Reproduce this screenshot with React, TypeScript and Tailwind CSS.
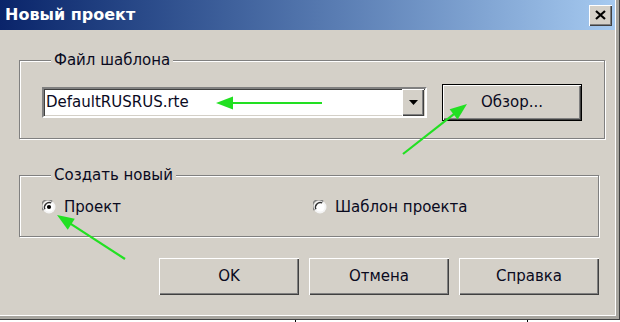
import React from 'react';

const font = { fontFamily: '"DejaVu Sans", Verdana, sans-serif' };

// green pointer arrow drawn from tail to tip
const Arrow: React.FC<{ x1: number; y1: number; x2: number; y2: number }> = ({ x1, y1, x2, y2 }) => {
  const dx = x2 - x1;
  const dy = y2 - y1;
  const len = Math.hypot(dx, dy);
  const ux = dx / len;
  const uy = dy / len;
  const bx = x2 - ux * 17;
  const by = y2 - uy * 17;
  const px = -uy * 6.5;
  const py = ux * 6.5;
  return (
    <g>
      <line x1={x1} y1={y1} x2={bx + ux * 2} y2={by + uy * 2} stroke="#22e022" strokeWidth={2.2} />
      <polygon points={`${x2},${y2} ${bx + px},${by + py} ${bx - px},${by - py}`} fill="#22e022" />
    </g>
  );
};

const Radio: React.FC<{ checked?: boolean }> = ({ checked }) => (
  <svg width="14" height="14" viewBox="0 0 14 14" className="shrink-0">
    <circle cx="7" cy="7" r="6.5" fill="#f4f4f4" />
    <circle cx="7" cy="7" r="4.6" fill="#ffffff" />
    <path d="M1.4 10.2 A6.2 6.2 0 0 1 10.2 1.4" stroke="#808080" strokeWidth="1.4" fill="none" />
    <path d="M2.9 9.2 A4.8 4.8 0 0 1 9.2 2.9" stroke="#303030" strokeWidth="1.4" fill="none" />
    {checked && <circle cx="7" cy="7" r="2.1" fill="#000000" />}
  </svg>
);

const Button: React.FC<{ label: string; isDefault?: boolean }> = ({ label, isDefault }) => (
  <div
    className={`flex h-[37px] w-[140px] items-center justify-center bg-[#d4d0c8] text-[15px] text-[#0a0a1e] ${
      isDefault
        ? 'border border-black shadow-[inset_1px_1px_0_#ffffff,inset_-1px_-1px_0_#404040,inset_-2px_-2px_0_#808080]'
        : 'shadow-[inset_1px_1px_0_#ffffff,inset_-1px_-1px_0_#404040,inset_-2px_-2px_0_#808080]'
    }`}
  >
    {label}
  </div>
);

const App: React.FC = () => {
  return (
    <div className="relative h-[322px] w-[620px] overflow-hidden bg-white" style={font}>
      {/* Dialog frame */}
      <div className="h-[320px] w-[620px] border-r border-b border-[#404040] bg-[#a8a6a0]">
        <div className="flex h-[316px] w-[616px] flex-col border-r border-b border-white bg-[#d4d0c8]">
          {/* Title bar */}
          <div className="flex h-[30px] w-[615px] shrink-0 items-center justify-between bg-gradient-to-r from-[#0a246a] to-[#a6caf0] pr-[3px] pl-[5px]">
            <span className="text-[16px] font-bold text-white">Новый проект</span>
            <div className="flex h-[21px] w-[23px] items-center justify-center bg-[#d4d0c8] shadow-[inset_1px_1px_0_#ffffff,inset_-1px_-1px_0_#404040,inset_-2px_-2px_0_#808080]">
              <svg width="11" height="10" viewBox="0 0 11 10">
                <path d="M1 1 L10 9 M10 1 L1 9" stroke="#000" strokeWidth="2.2" />
              </svg>
            </div>
          </div>

          {/* Content */}
          <div className="flex flex-1 flex-col pl-[19px] text-[#0a0a1e]">
            {/* Template file */}
            <fieldset className="mt-[22px] w-[580px] border border-[#808080] px-[22px] pt-[16px] pb-[17px] shadow-[1px_1px_0_#ffffff,inset_1px_1px_0_#ffffff]">
              <legend className="ml-[9px] bg-[#d4d0c8] px-[3px] text-[15px] leading-[16px]">Файл шаблона</legend>
              <div className="flex items-center gap-[15px]">
                <div className="flex h-[31px] w-[385px] items-center border-2 border-t-[#808080] border-r-white border-b-white border-l-[#808080] bg-white shadow-[inset_1px_1px_0_#404040,inset_-1px_-1px_0_#d4d0c8]">
                  <span className="flex-1 pl-[2px] text-[15px]">DefaultRUSRUS.rte</span>
                  <div className="mr-px flex h-[27px] w-[22px] items-center justify-center bg-[#d4d0c8] shadow-[inset_1px_1px_0_#ffffff,inset_-1px_-1px_0_#404040,inset_-2px_-2px_0_#808080]">
                    <svg width="9" height="5" viewBox="0 0 9 5">
                      <path d="M0 0 H9 L4.5 5 Z" fill="#000" />
                    </svg>
                  </div>
                </div>
                <Button label="Обзор..." isDefault />
              </div>
            </fieldset>

            {/* Create new */}
            <fieldset className="mt-[28px] w-[580px] border border-[#808080] pt-[16px] pr-[10px] pb-[21px] pl-[22px] shadow-[1px_1px_0_#ffffff,inset_1px_1px_0_#ffffff]">
              <legend className="ml-[9px] bg-[#d4d0c8] px-[3px] text-[15px] leading-[16px]">Создать новый</legend>
              <div className="flex h-[16px] items-center">
                <div className="flex w-[271px] items-center gap-[8px]">
                  <Radio checked />
                  <span className="text-[15px]">Проект</span>
                </div>
                <div className="flex items-center gap-[8px]">
                  <Radio />
                  <span className="text-[15px]">Шаблон проекта</span>
                </div>
              </div>
            </fieldset>

            {/* Actions */}
            <div className="mt-[21px] flex w-[580px] justify-end gap-[10px]">
              <Button label="OK" />
              <Button label="Отмена" />
              <Button label="Справка" />
            </div>
          </div>
        </div>
      </div>

      {/* Window behind the dialog */}
      <div className="flex h-[2px]">
        <div className="w-[295px]" />
        <div className="w-px bg-black" />
        <div className="w-[231px]" />
        <div className="w-px bg-black" />
      </div>

      {/* Annotation arrows */}
      <svg className="pointer-events-none absolute inset-0" width="620" height="322">
        <Arrow x1={322} y1={103} x2={216} y2={103} />
        <Arrow x1={403} y1={154} x2={467} y2={104} />
        <Arrow x1={125} y1={259} x2={57} y2={215} />
      </svg>
    </div>
  );
};

export default App;
